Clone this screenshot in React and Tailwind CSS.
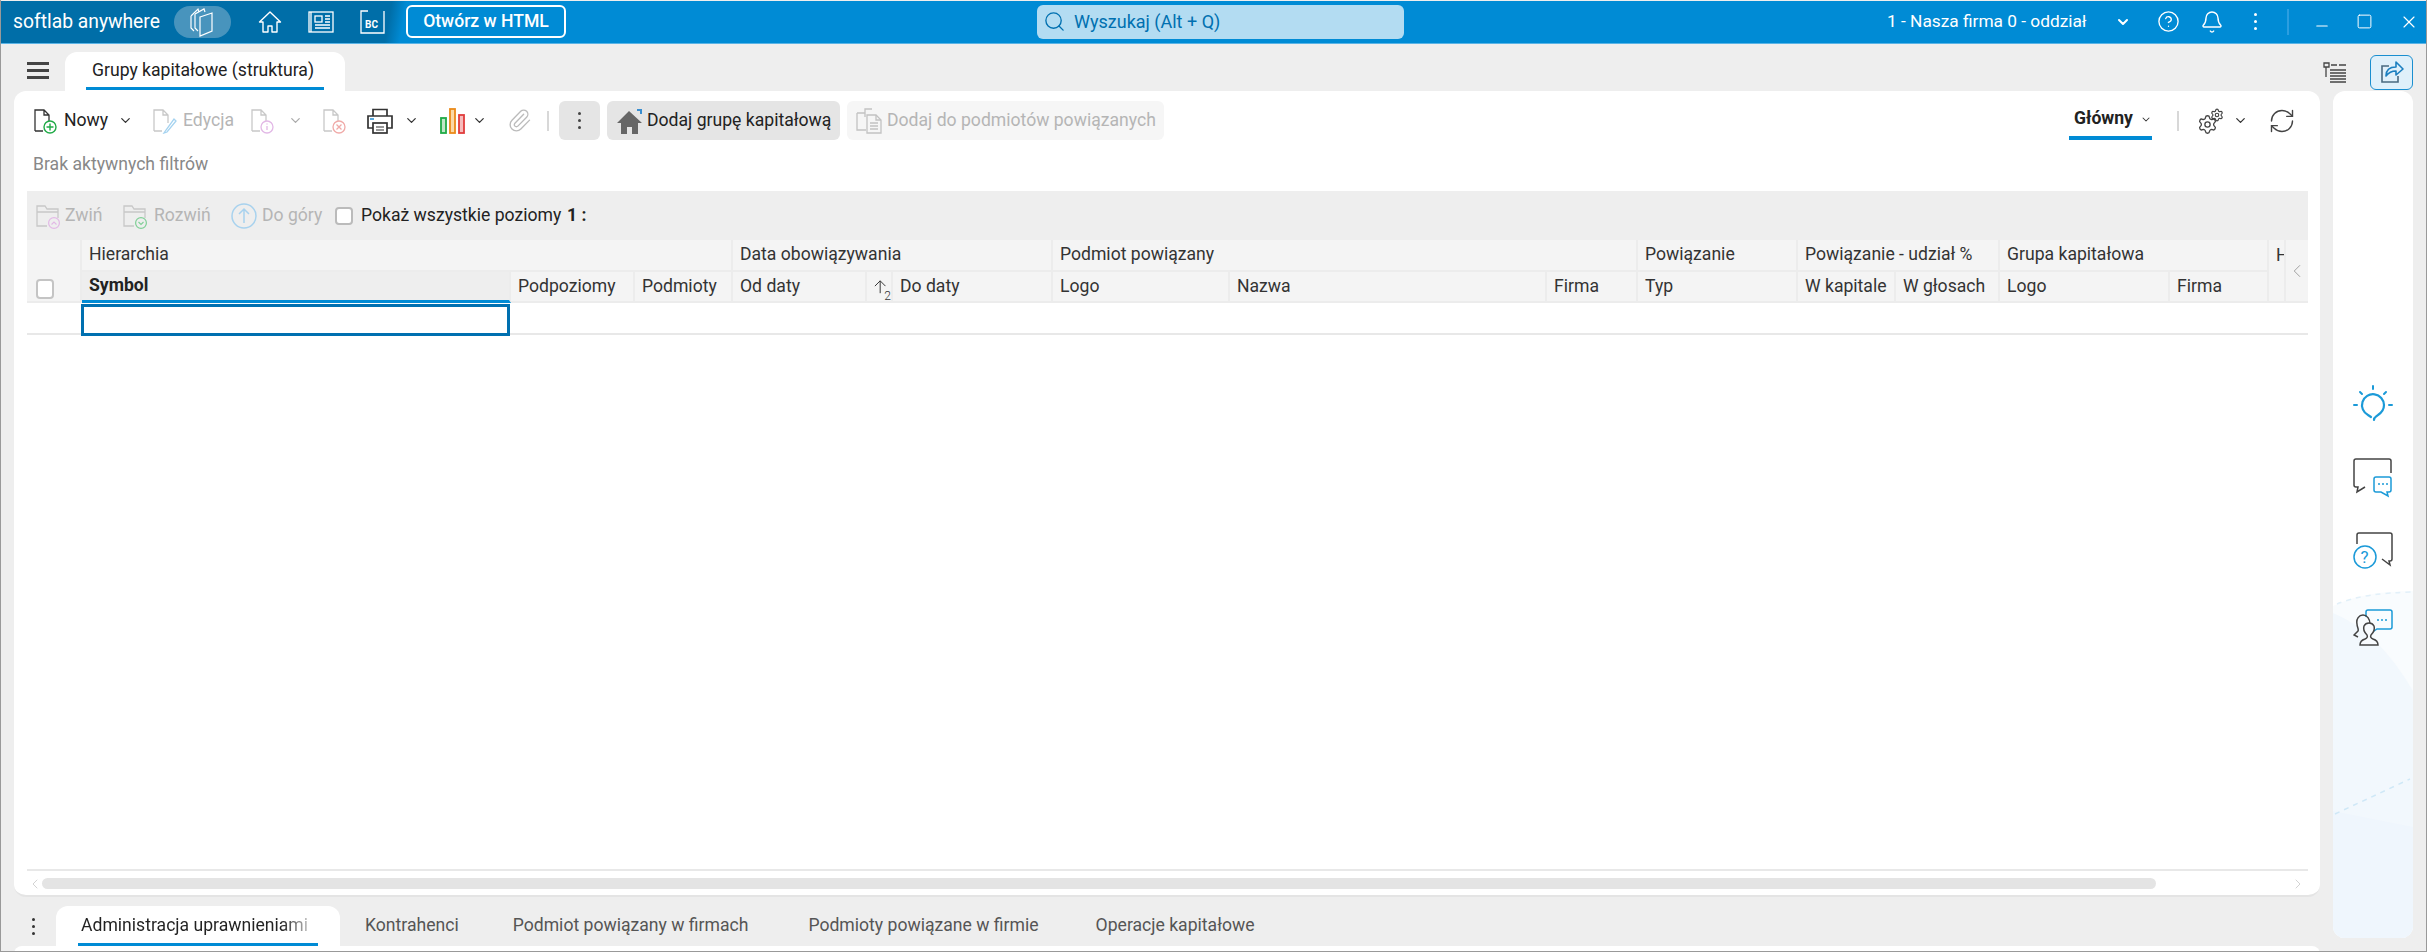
import React from 'react';
import { Bell, ChevronDown, ChevronLeft, ChevronRight, CircleHelp, Minus, Paperclip, RefreshCw, Search, Settings, Square, X } from 'lucide-react';

const Chevron = ({ className = 'text-[#333]' }) => <ChevronDown size={15} strokeWidth={2} className={className} />;

const Dots = ({ className = 'bg-[#444]' }) => (
  <div className="flex flex-col gap-[4px]">
    <i className={`block w-[3px] h-[3px] rounded-full ${className}`} />
    <i className={`block w-[3px] h-[3px] rounded-full ${className}`} />
    <i className={`block w-[3px] h-[3px] rounded-full ${className}`} />
  </div>
);

const LogoIcon = () => (
  <svg width="28" height="30" viewBox="0 0 28 30" fill="none" stroke="#fff" strokeWidth="1.2">
    <path d="M2 9 9 2l1 3M2 9v12l3 3" />
    <path d="M6 7l9-5 1 3M6 7v14l3 3" />
    <path d="M11 10l12-4v18l-12 5z" />
  </svg>
);
const HomeIcon = () => (
  <svg width="24" height="22" viewBox="0 0 24 22" fill="none" stroke="#fff" strokeWidth="1.4">
    <path d="M1.5 11 12 1l10.5 10H19v10h-5v-6h-4v6H5V11z" strokeLinejoin="round" />
  </svg>
);
const NewsIcon = () => (
  <svg width="26" height="22" viewBox="0 0 26 22" fill="none" stroke="#fff" strokeWidth="1.3">
    <rect x="1" y="1" width="24" height="20" />
    <path d="M3 1v20" />
    <rect x="7" y="5" width="7" height="6" />
    <path d="M17 5h5M17 8h5M17 11h5M7 14h15M7 17h15" />
  </svg>
);
const BcIcon = () => (
  <svg width="25" height="24" viewBox="0 0 25 24" fill="none" stroke="#fff" strokeWidth="1.3">
    <path d="M8 1H1v22h23V1" />
    <text x="5" y="18" fill="#fff" stroke="none" fontSize="10" fontWeight="700" fontFamily="Roboto, sans-serif">BC</text>
  </svg>
);

const DocIcon = ({ stroke, badge, pen }) => (
  <svg width="26" height="26" viewBox="0 0 26 26" fill="none">
    <path d="M2 23V2h9l5 5v8M11 2v5h5M2 23h8" stroke={stroke} strokeWidth="1.3" />
    {pen && <path d="M14 22l-2 3 3-1 9-11-2-2z" stroke="#a5d3f0" strokeWidth="1.3" />}
    {badge === 'plus' && (
      <g stroke="#1faa46" strokeWidth="1.4">
        <circle cx="17" cy="19" r="6" fill="#fff" />
        <path d="M17 15.5v7M13.5 19h7" />
      </g>
    )}
    {badge === 'info' && (
      <g stroke="#e2b8e6" strokeWidth="1.3">
        <circle cx="17" cy="19" r="6" fill="#fff" />
        <path d="M17 18v4M17 15.5v1" />
      </g>
    )}
    {badge === 'x' && (
      <g stroke="#f0aaa8" strokeWidth="1.3">
        <circle cx="17" cy="19" r="6" fill="#fff" />
        <path d="M14.5 16.5l5 5M19.5 16.5l-5 5" />
      </g>
    )}
  </svg>
);

const PrinterIcon = () => (
  <svg width="28" height="26" viewBox="0 0 28 26" fill="none" stroke="#333" strokeWidth="1.7">
    <path d="M7 8V1.5h14V8" />
    <path d="M7 20H2V8h24v12h-5" />
    <rect x="7" y="15" width="14" height="10" />
    <path d="M10 19h8M10 22h8" strokeWidth="1.2" />
    <path d="M4 11h4" stroke="#3a9ad9" />
  </svg>
);
const ChartIcon = () => (
  <svg width="26" height="26" viewBox="0 0 26 26" strokeWidth="1.8">
    <rect x="1" y="10" width="5" height="15" fill="#bfe6c8" stroke="#1faa46" />
    <rect x="10" y="1" width="5" height="24" fill="#fbd9a6" stroke="#ea8a1a" />
    <rect x="19" y="7" width="5" height="18" fill="#f6bcbc" stroke="#e03c3c" />
  </svg>
);
const HouseFill = () => (
  <svg width="27" height="26" viewBox="0 0 27 26">
    <path d="M13 3 1 15h4v11h6v-7h5v7h6V15h4z" fill="#666" />
    <path d="M21 1h5v5h-2V3h-3z" fill="#3a8ed0" />
  </svg>
);
const DocsIcon = () => (
  <svg width="27" height="26" viewBox="0 0 27 26" fill="none" stroke="#c2c2c2" strokeWidth="1.3">
    <path d="M9 5V1h7M1 5h8v4M1 5v17h9" />
    <path d="M11 7h9l5 5v13H11z" />
    <path d="M20 7v5h5M14 15h8M14 18h8M14 21h8" />
  </svg>
);
const FolderIcon = ({ color, up }) => (
  <svg width="25" height="26" viewBox="0 0 25 26" fill="none">
    <path d="M11 23H1V3h8l2 3h11v9M1 9h21" stroke="#c8c8c8" strokeWidth="1.3" />
    <circle cx="18" cy="20" r="5.4" stroke={color} strokeWidth="1.2" fill="#eee" />
    <path d={up ? 'M15.5 21.5 18 19l2.5 2.5' : 'M15.5 19 18 21.5 20.5 19'} stroke={color} strokeWidth="1.1" />
  </svg>
);
const UpIcon = () => (
  <svg width="26" height="26" viewBox="0 0 26 26" fill="none" stroke="#a8d2ee" strokeWidth="1.5">
    <circle cx="13" cy="13" r="12" />
    <path d="M13 20V6M8 11l5-5 5 5" />
  </svg>
);
const SortArrow = () => (
  <svg width="14" height="16" viewBox="0 0 14 16" fill="none" stroke="#333" strokeWidth="1.1">
    <path d="M7 15V1M1 7l6-6 6 6" />
  </svg>
);
const TreeListIcon = () => (
  <svg width="24" height="21" viewBox="0 0 24 21" fill="none" stroke="#444" strokeWidth="1.3">
    <path d="M1 1h5v4H1zM8 3h6M16 3h7M3 5v10M7 8h16M7 11h16M7 14h16M7 17h16M7 20h16" />
  </svg>
);
const ShareIcon = () => (
  <svg width="24" height="22" viewBox="0 0 24 22" fill="none" stroke="#1a7fc0" strokeWidth="1.6">
    <path d="M9 5H2v16h16v-6" stroke="#4a6a80" />
    <path d="M6 15c0-6 4-9 10-9V1l7 7-7 6V10c-4 0-7 1-10 5z" strokeLinejoin="round" />
  </svg>
);

const BulbIcon = () => (
  <svg width="40" height="38" viewBox="0 0 40 38" fill="none" stroke="#1b9ad8" strokeWidth="2" strokeLinecap="round">
    <path d="M20 1v3M7 7l2 2M33 7l-2 2M1 20h3M36 20h3" />
    <path d="M21 35c0-3 2-3 4-5 3-2 6-5 6-10a11 11 0 1 0-16 10l3 2" strokeWidth="2.2" />
  </svg>
);
const ChatIcon = () => (
  <svg width="40" height="40" viewBox="0 0 40 40" fill="none" strokeWidth="1.5">
    <path d="M38 15V3q0-2-2-2H3Q1 1 1 3v24q0 2 2 2h2l-1 5 8-5" stroke="#444" />
    <path d="M21 21q0-2 2-2h13q2 0 2 2v11q0 2-2 2h-2l1 4-7-4h-5q-2 0-2-2z" stroke="#1b9ad8" fill="#fff" />
    <path d="M25 26h2M29 26h2M33 26h2" stroke="#1b9ad8" />
  </svg>
);
const QuestionIcon = () => (
  <svg width="40" height="38" viewBox="0 0 40 38" fill="none" strokeWidth="1.5">
    <path d="M4 12V3q0-2 2-2h31q2 0 2 2v24q0 2-2 2h-1l1 4-8-6" stroke="#444" />
    <circle cx="12" cy="25" r="11" stroke="#1b9ad8" fill="#fff" />
    <text x="7.5" y="31" fill="#1b9ad8" fontSize="17" fontFamily="Roboto, sans-serif">?</text>
  </svg>
);
const UserChatIcon = () => (
  <svg width="40" height="38" viewBox="0 0 40 38" fill="none" strokeWidth="1.5">
    <path d="M13 8V3q0-2 2-2h22q2 0 2 2v15q0 2-2 2H24l-6 4" stroke="#1b9ad8" />
    <path d="M24 11h2M28 11h2M32 11h2" stroke="#1b9ad8" />
    <path d="M17 15c0-5-3-9-7-9s-7 4-6 9c0 3 2 5 1 7l-4 4 4 2" stroke="#444" />
    <path d="M7 36c0-4 2-5 5-6 2-1 3-2 2-4-3-3-4-6-3-9 1-2 3-3 5-3s4 1 5 3c1 3 0 6-3 9-1 2 0 3 2 4 3 1 5 2 5 6z" stroke="#444" fill="#f8fbfe" />
  </svg>
);

const Divider = ({ ml }) => <div className={`w-[2px] h-[20px] bg-[#d8d8d8] ${ml}`} />;

const columns = 'grid-cols-[55px_429px_124px_98px_134px_26px_160px_177px_317px_91px_160px_98px_104px_170px_99px_17px_22px]';

const Cell = ({ span = '', className = '', children }) => (
  <div className={`flex items-center pl-[7px] overflow-hidden whitespace-nowrap border-r-2 border-b-2 border-[#ececec] ${span} ${className}`}>{children}</div>
);

const Toolbar = () => (
  <div className="flex items-center h-[39px] mt-[10px] pl-[19px] pr-[24px]">
    <DocIcon stroke="#333" badge="plus" />
    <span className="ml-[5px] w-[44px] whitespace-nowrap text-[#222]">Nowy</span>
    <Chevron className="ml-[10px] text-[#333]" />
    <div className="ml-[19px]"><DocIcon stroke="#c8c8c8" pen /></div>
    <span className="ml-[5px] w-[50px] whitespace-nowrap text-[#b5b5b5]">Edycja</span>
    <div className="ml-[17px]"><DocIcon stroke="#c8c8c8" badge="info" /></div>
    <Chevron className="ml-[12px] text-[#aaa]" />
    <div className="ml-[19px]"><DocIcon stroke="#c8c8c8" badge="x" /></div>
    <div className="ml-[18px]"><PrinterIcon /></div>
    <Chevron className="ml-[10px] text-[#333]" />
    <div className="ml-[21px]"><ChartIcon /></div>
    <Chevron className="ml-[6px] text-[#333]" />
    <Paperclip size={25} strokeWidth={1.3} className="ml-[20px] text-[#bbb]" />
    <Divider ml="ml-[15px]" />
    <div className="ml-[10px] w-[41px] h-[39px] flex items-center justify-center rounded-md bg-[#e5e5e5]"><Dots /></div>
    <div className="ml-[7px] w-[233px] h-[39px] flex items-center pl-[9px] gap-[4px] rounded-md bg-[#e5e5e5] text-[#222] whitespace-nowrap">
      <HouseFill />
      <span>Dodaj grupę kapitałową</span>
    </div>
    <div className="ml-[7px] w-[317px] h-[39px] flex items-center pl-[9px] gap-[4px] rounded-md bg-[#f6f6f6] text-[#b5b5b5] whitespace-nowrap">
      <DocsIcon />
      <span>Dodaj do podmiotów powiązanych</span>
    </div>
    <div className="ml-auto w-[83px] h-[39px] flex items-center pl-[5px] gap-[7px] pt-[1px] border-b-[4px] border-[#008bd5] text-[#222] font-bold">
      <span className="w-[59px] whitespace-nowrap">Główny</span>
      <ChevronDown size={15} strokeWidth={2} className="text-[#333]" />
    </div>
    <Divider ml="ml-[25px]" />
    <div className="ml-[18px] relative w-[27px] h-[26px]">
      <Settings size={21} strokeWidth={1.5} className="mt-[6px] text-[#444]" />
      <Settings size={14} strokeWidth={2} className="absolute top-0 right-0 text-[#444]" />
    </div>
    <Chevron className="ml-[9px] text-[#333]" />
    <RefreshCw size={28} strokeWidth={1.2} className="ml-[20px] text-[#444]" />
  </div>
);

const TreeBar = () => (
  <div className="flex items-center h-[49px] bg-[#eee] pl-[9px] whitespace-nowrap">
    <FolderIcon color="#e2b8e6" up />
    <span className="ml-[4px] w-[37px] text-[#b5b5b5]">Zwiń</span>
    <div className="ml-[21px]"><FolderIcon color="#7fcf96" /></div>
    <span className="ml-[6px] w-[56px] text-[#b5b5b5]">Rozwiń</span>
    <div className="ml-[21px]"><UpIcon /></div>
    <span className="ml-[5px] w-[60px] text-[#b5b5b5]">Do góry</span>
    <i className="ml-[13px] block w-[18px] h-[18px] rounded-[4px] border-2 border-[#bbb] bg-white" />
    <span className="ml-[8px] w-[200px] text-[#222]">Pokaż wszystkie poziomy</span>
    <span className="ml-[6px] text-[#222] font-bold">1 :</span>
  </div>
);

const TableHead = () => (
  <div className={`grid ${columns} grid-rows-[32px_31px] bg-[#f4f4f4] text-[#333]`}>
    <Cell span="row-span-2" className="items-end pl-[9px] pb-[2px]">
      <i className="block w-[18px] h-[20px] rounded-[4px] border-2 border-[#c4c4c4] bg-white" />
    </Cell>
    <Cell span="col-span-3">Hierarchia</Cell>
    <Cell span="col-span-3">Data obowiązywania</Cell>
    <Cell span="col-span-3">Podmiot powiązany</Cell>
    <Cell className="border-b-0">Powiązanie</Cell>
    <Cell span="col-span-2">Powiązanie - udział %</Cell>
    <Cell span="col-span-2">Grupa kapitałowa</Cell>
    <Cell span="row-span-2" className="items-start pt-[7px]">H</Cell>
    <div className="row-span-2 flex items-center justify-center border-b-2 border-[#ececec]">
      <ChevronLeft size={24} strokeWidth={1} className="text-[#999]" />
    </div>
    <Cell className="bg-[#eee] border-b-[3px] border-b-[#008bd5] font-bold text-[#222]">Symbol</Cell>
    <Cell>Podpoziomy</Cell>
    <Cell>Podmioty</Cell>
    <Cell>Od daty</Cell>
    <Cell className="pl-[5px] items-start pt-[7px]">
      <SortArrow />
      <span className="text-[12px] leading-[9px] mt-[13px] -ml-[2px] font-light">2</span>
    </Cell>
    <Cell>Do daty</Cell>
    <Cell>Logo</Cell>
    <Cell>Nazwa</Cell>
    <Cell>Firma</Cell>
    <Cell>Typ</Cell>
    <Cell>W kapitale</Cell>
    <Cell>W głosach</Cell>
    <Cell>Logo</Cell>
    <Cell>Firma</Cell>
  </div>
);

const ScrollBar = () => (
  <div className="flex items-center h-[27px] border-t-2 border-[#e8e8e8] mt-auto -mb-[1px]">
    <ChevronLeft size={16} strokeWidth={1.3} className="text-[#ccc] -mr-[1px]" />
    <div className="w-[2114px] h-[11px] rounded-full bg-[#e4e4e4]" />
    <ChevronRight size={16} strokeWidth={1.3} className="ml-auto mr-[2px] text-[#ccc]" />
  </div>
);

const BottomTabs = () => (
  <div className="flex items-center h-[40px] mt-[9px] text-[#555] whitespace-nowrap">
    <div className="w-[42px] pl-[18px]"><Dots className="bg-[#333]" /></div>
    <div className="relative w-[284px] h-[40px] flex items-center pl-[25px] rounded-t-xl bg-white">
      <span className="w-[236px] bg-[linear-gradient(90deg,#222_200px,#ccc_230px)] bg-clip-text text-transparent">Administracja uprawnieniami</span>
      <i className="absolute left-[22px] bottom-0 block w-[240px] h-[3px] bg-[#008bd5]" />
    </div>
    <span className="ml-[25px]">Kontrahenci</span>
    <span className="ml-[54px]">Podmiot powiązany w firmach</span>
    <span className="ml-[60px]">Podmioty powiązane w firmie</span>
    <span className="ml-[57px]">Operacje kapitałowe</span>
  </div>
);

const SideBar = () => (
  <div className="relative w-[80px] h-[847px] flex flex-col items-center overflow-hidden rounded-xl bg-white">
    <svg className="absolute inset-0" width="80" height="847" viewBox="0 0 80 847" fill="none">
      <path d="M0 515Q30 500 80 500V847H0Z" fill="#f9fcfe" />
      <path d="M0 522Q45 540 80 600V847H0Z" fill="#f2f8fd" />
      <path d="M80 600V720L0 720V600Z" fill="#f2f8fd" />
      <path d="M0 720L80 736V847H0Z" fill="#eff6fd" />
      <path d="M4 513Q30 502 80 501" stroke="#e2f0f9" strokeWidth="1.5" strokeDasharray="5 5" />
      <path d="M2 723L77 688" stroke="#cfe8f7" strokeWidth="1.5" strokeDasharray="5 5" />
    </svg>
    <div className="relative flex flex-col items-center mt-[294px]">
      <BulbIcon />
      <div className="mt-[35px]"><ChatIcon /></div>
      <div className="mt-[34px]"><QuestionIcon /></div>
      <div className="mt-[39px]"><UserChatIcon /></div>
    </div>
  </div>
);

export default function App() {
  return (
    <div className="w-[2427px] h-[952px] overflow-hidden flex flex-col bg-[#eee] font-[Roboto,sans-serif] text-[17.6px] leading-none border-l border-r border-b border-[#999]">
      <div className="shrink-0 flex items-center h-[43px] mt-[1px] pb-[1px] pl-[12px] border-b border-[#5ab4e6] bg-[linear-gradient(100deg,#006ea8_0,#006ea8_385px,#008bd5_400px)] text-white whitespace-nowrap">
        <span className="w-[150px] text-[19.3px]">softlab anywhere</span>
        <div className="ml-[11px] w-[57px] h-[32px] flex items-center justify-center rounded-full bg-[#4894bd]"><LogoIcon /></div>
        <div className="ml-[27px]"><HomeIcon /></div>
        <div className="ml-[26px]"><NewsIcon /></div>
        <div className="ml-[26px]"><BcIcon /></div>
        <div className="ml-[21px] w-[160px] h-[33px] flex items-center justify-center rounded-md border-2 border-white text-[17.6px] font-medium">Otwórz w HTML</div>
        <div className="ml-[471px] w-[367px] h-[34px] flex items-center pl-[6px] gap-[8px] rounded-md bg-[#b3dcf2] text-[#0070b0] text-[18px]">
          <Search size={23} strokeWidth={1.4} />
          <span>Wyszukaj (Alt + Q)</span>
        </div>
        <span className="ml-[483px] w-[202px] text-[17.3px]">1 - Nasza firma 0 - oddział</span>
        <ChevronDown size={16} strokeWidth={3} className="ml-[26px]" />
        <CircleHelp size={23} strokeWidth={1.4} className="ml-[26px]" />
        <Bell size={24} strokeWidth={1.4} className="ml-[20px]" />
        <div className="ml-[30px]"><Dots className="bg-white" /></div>
        <div className="ml-[30px] w-[2px] h-[26px] bg-[#2c9ee0]" />
        <Minus size={18} strokeWidth={1.4} className="ml-[24px] mt-[8px]" />
        <Square size={17} strokeWidth={1.4} className="ml-[25px]" />
        <X size={20} strokeWidth={1.4} className="ml-[26px]" />
      </div>

      <div className="shrink-0 flex items-end h-[47px]">
        <div className="self-center w-[22px] ml-[26px] mt-[6px] flex flex-col gap-[4px]">
          <i className="block h-[3px] bg-[#444]" />
          <i className="block h-[3px] bg-[#444]" />
          <i className="block h-[3px] bg-[#444]" />
        </div>
        <div className="relative ml-[16px] w-[280px] h-[39px] flex items-center pl-[27px] pb-[2px] rounded-t-xl bg-white text-[#222]">
          <span className="whitespace-nowrap">Grupy kapitałowe (struktura)</span>
          <i className="absolute left-[21px] bottom-[1px] block w-[238px] h-[3px] bg-[#008bd5]" />
        </div>
        <div className="ml-auto mr-[13px] self-stretch flex items-center gap-[23px] pt-[9px]">
          <TreeListIcon />
          <div className="w-[43px] h-[35px] flex items-center justify-center rounded-md border border-[#1a8fd0] bg-[#dff0fa]"><ShareIcon /></div>
        </div>
      </div>

      <div className="flex items-start ml-[13px] flex-1 min-h-0">
        <div className="flex flex-col w-[2306px] shrink-0">
          <div className="flex flex-col h-[806px] rounded-xl bg-white border-b-2 border-[#e4e4e4]">
            <Toolbar />
            <div className="mt-[13px] h-[24px] flex items-center pl-[19px] text-[#888]">Brak aktywnych filtrów</div>
            <div className="flex flex-col flex-1 mt-[14px] ml-[13px] mr-[12px] min-h-0">
              <TreeBar />
              <TableHead />
              <div className="flex h-[32px] border-b-2 border-[#e8e8e8]">
                <div className="ml-[54px] mt-[1px] w-[429px] h-[32px] border-[3px] border-[#0070b0]" />
              </div>
              <ScrollBar />
            </div>
          </div>
          <BottomTabs />
          <div className="h-[8px] rounded-t-xl bg-white" />
        </div>
        <div className="ml-[13px]"><SideBar /></div>
      </div>
    </div>
  );
}
